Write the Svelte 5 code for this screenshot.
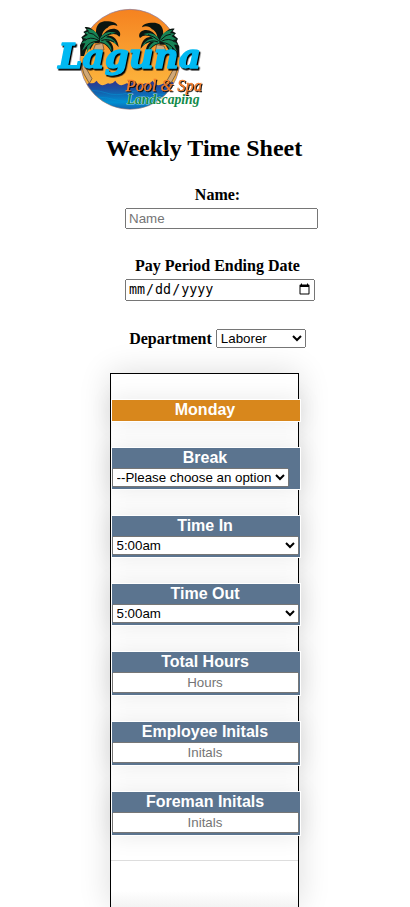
<script>
  const departments = ['Laborer', 'Foreman', 'Office'];
  const times = ['5:00am', '5:30am', '6:00am', '6:30am', '7:00am'];
  const rows = [
    { id: 'break', label: 'Break', kind: 'select', fit: true, options: ['--Please choose an option', 'Yes', 'No'] },
    { id: 'time-in', label: 'Time In', kind: 'select', options: times },
    { id: 'time-out', label: 'Time Out', kind: 'select', options: times },
    { id: 'hours', label: 'Total Hours', kind: 'input', placeholder: 'Hours' },
    { id: 'employee', label: 'Employee Initals', kind: 'input', placeholder: 'Initals' },
    { id: 'foreman', label: 'Foreman Initals', kind: 'input', placeholder: 'Initals' }
  ];
</script>

{#snippet palm()}
  <path class="trunk" d="M136 134 L158 130 L162 150 L130 150Z M100 176 L112 174 L108 204 L126 236 L118 250 L102 222 L96 202Z" />
  <path class="frond-dark" d="M144 122 C132 92 138 64 168 64 C188 64 202 70 202 78 C190 72 178 76 172 84 C162 88 156 100 156 108 C166 90 190 78 206 92 C212 98 212 106 208 110 C196 98 184 102 172 108 C188 104 204 118 206 142 C196 128 186 122 176 122 C190 132 194 148 186 162 C176 138 164 130 150 128Z" />
  <path class="frond-dark" d="M146 120 C138 92 120 78 104 82 L110 90 L100 96 L106 102 L94 112 L98 120 L90 136 L92 168 L102 168 L108 150 L116 140 L120 150 L132 130 L150 130Z" />
  <path class="frond" d="M148 118 C144 96 128 86 110 86 L118 94 L104 98 L114 104 L98 114 L110 116 L94 130 L106 130 L96 152 L112 138 L110 160 L124 136 L136 126Z" />
  <path class="frond" d="M150 116 C158 98 176 92 198 98 C186 100 176 104 168 112 C184 112 196 122 200 134 C186 122 176 120 166 122 C180 132 186 144 184 154 C174 134 164 128 150 126Z" />
  <path class="frond-line" d="M146 116 Q130 98 114 98 M144 120 Q120 108 104 122 M142 124 Q120 124 106 144 M152 118 Q164 106 184 100 M154 122 Q172 114 192 126" />
{/snippet}

<main>
  <svg class="logo" viewBox="18 24 450 306" role="img" aria-label="Laguna Pool &amp; Spa Landscaping">
    <defs>
      <linearGradient id="sky" x1="0" y1="0" x2="0" y2="1">
        <stop offset="0" stop-color="#f58220" />
        <stop offset="0.8" stop-color="#fdb73e" />
      </linearGradient>
      <linearGradient id="sea" x1="0" y1="0" x2="0" y2="1">
        <stop offset="0" stop-color="#34358c" />
        <stop offset="0.25" stop-color="#1b4fa0" />
        <stop offset="0.7" stop-color="#0090d2" />
        <stop offset="1" stop-color="#1c4fa0" />
      </linearGradient>
      <clipPath id="disc"><circle cx="240" cy="178" r="149" /></clipPath>
    </defs>
    <circle cx="240" cy="178" r="150" fill="url(#sky)" stroke="#8275a0" stroke-width="2" />
    <g clip-path="url(#disc)">
      <path fill="url(#sea)" d="M85 248 Q100 262 118 248 Q130 254 140 242 Q152 264 174 250 Q186 254 196 242 Q208 264 230 250 Q242 254 252 242 Q264 264 286 250 Q298 254 308 242 Q320 264 342 250 Q354 254 364 242 Q376 258 395 246 V335 H85Z" />
      <path fill="none" stroke="#00a0dc" stroke-width="3" d="M98 278 Q132 266 166 278 T236 278 T306 278 T390 276 M110 298 Q150 286 190 298 T270 298 T366 298" opacity="0.4" />
    </g>
    {@render palm()}
    <g transform="translate(478 4) scale(-1 1)">{@render palm()}</g>
    <g class="laguna"><text x="25" y="204">Laguna</text></g>
    <g class="pool"><text x="227" y="272">Pool &amp; Spa</text></g>
    <text class="landscaping" x="230" y="311">Landscaping</text>
  </svg>

  <h2>Weekly Time Sheet</h2>

  <div class="fields">
    <div class="field">
      <label for="name">Name:</label>
      <input id="name" class="name" type="text" placeholder="Name" />
    </div>
    <div class="field">
      <label for="period">Pay Period Ending Date</label>
      <input id="period" class="date" type="date" />
    </div>
    <div class="department">
      <label for="department">Department</label>
      <select id="department">
        {#each departments as name}<option>{name}</option>{/each}
      </select>
    </div>
  </div>

  <section class="sheet">
    <div class="day">
      <h3 class="cell heading">Monday</h3>
      {#each rows as row}
        <div class="cell">
          <label for={row.id}>{row.label}</label>
          {#if row.kind === 'select'}
            <select id={row.id} class:fit={row.fit}>
              {#each row.options as option}<option>{option}</option>{/each}
            </select>
          {:else}
            <input id={row.id} type="text" placeholder={row.placeholder} />
          {/if}
        </div>
      {/each}
    </div>
  </section>
</main>

<style>
  :global(body) {
    margin: 0;
    background: #fff;
  }
  main {
    box-sizing: border-box;
    min-height: 100vh;
    padding: 8px 10px 0 8px;
    display: flex;
    flex-direction: column;
    font-family: "Liberation Serif", serif;
    font-size: 16px;
    color: #000;
  }
  .logo {
    width: 150px;
    height: 102px;
    margin-left: 48px;
    flex: none;
    overflow: visible;
  }
  .trunk { fill: #cfa878; stroke: #54402c; stroke-width: 2; }
  .frond-dark { fill: #0b1510; }
  .frond { fill: #178456; }
  .frond-line { fill: none; stroke: #0b1510; stroke-width: 3; }
  .laguna {
    font: italic bold 103px "DejaVu Serif", serif;
    fill: #00b9f2;
    stroke: #00b9f2;
    stroke-width: 4;
    stroke-linejoin: round;
    filter: drop-shadow(4px 5px 0 #000);
  }
  .pool {
    font: italic 49px "Liberation Serif", serif;
    fill: #f47b29;
    stroke: #f47b29;
    filter: drop-shadow(3px 3px 0 #111);
  }
  .landscaping {
    font: italic bold 41px "Liberation Serif", serif;
    fill: #128a49;
    stroke: #fff;
    stroke-width: 2;
    paint-order: stroke;
  }
  h2 {
    margin: 24px 0;
    font-size: 24px;
    line-height: 28px;
    text-align: center;
  }
  .fields {
    width: 185px;
    padding-left: 27px;
    margin: 0 auto;
    font-weight: bold;
  }
  .field {
    display: flex;
    flex-direction: column;
    align-items: flex-start;
    gap: 4px;
    margin-bottom: 28px;
  }
  .field label {
    width: 100%;
    line-height: 18px;
    text-align: center;
  }
  input, select {
    box-sizing: border-box;
    margin: 0;
    font-family: "Liberation Sans", Arial, sans-serif;
  }
  .name { width: 193px; height: 21px; }
  .date {
    width: 190px;
    height: 22px;
    font-family: monospace;
  }
  .department {
    display: flex;
    align-items: center;
    justify-content: center;
    gap: 4px;
    line-height: 18px;
    white-space: nowrap;
  }
  .department select { width: 90px; height: 19px; }
  .sheet {
    box-sizing: border-box;
    flex: 1;
    width: 189px;
    margin: 25px auto 0;
    padding-top: 25px;
    border: 1px solid #000;
    border-bottom: 0;
    box-shadow: 0 0 30px rgba(0, 0, 0, 0.14);
    background: linear-gradient(to top, #f3f3f3, #fff 16px);
  }
  .day {
    display: flex;
    flex-direction: column;
    gap: 25px;
    padding-bottom: 24px;
    border-bottom: 1px solid #ddd;
  }
  .cell {
    width: 187px;
    margin: 0;
    padding: 0 1px 2px 0;
    border: 1px solid #fff;
    background: #5b748f;
    box-shadow: 0 0 25px rgba(0, 0, 0, 0.09);
    color: #fff;
    font: bold 16px/20px "Liberation Sans", Arial, sans-serif;
    text-align: center;
  }
  .heading {
    padding-bottom: 1px;
    background: #d8871c;
  }
  .cell label, .cell select, .cell input { display: block; }
  .cell select, .cell input { width: 100%; }
  .cell select { height: 19px; }
  .cell input { height: 21px; text-align: center; }
  .cell .fit { width: 177px; }
</style>
